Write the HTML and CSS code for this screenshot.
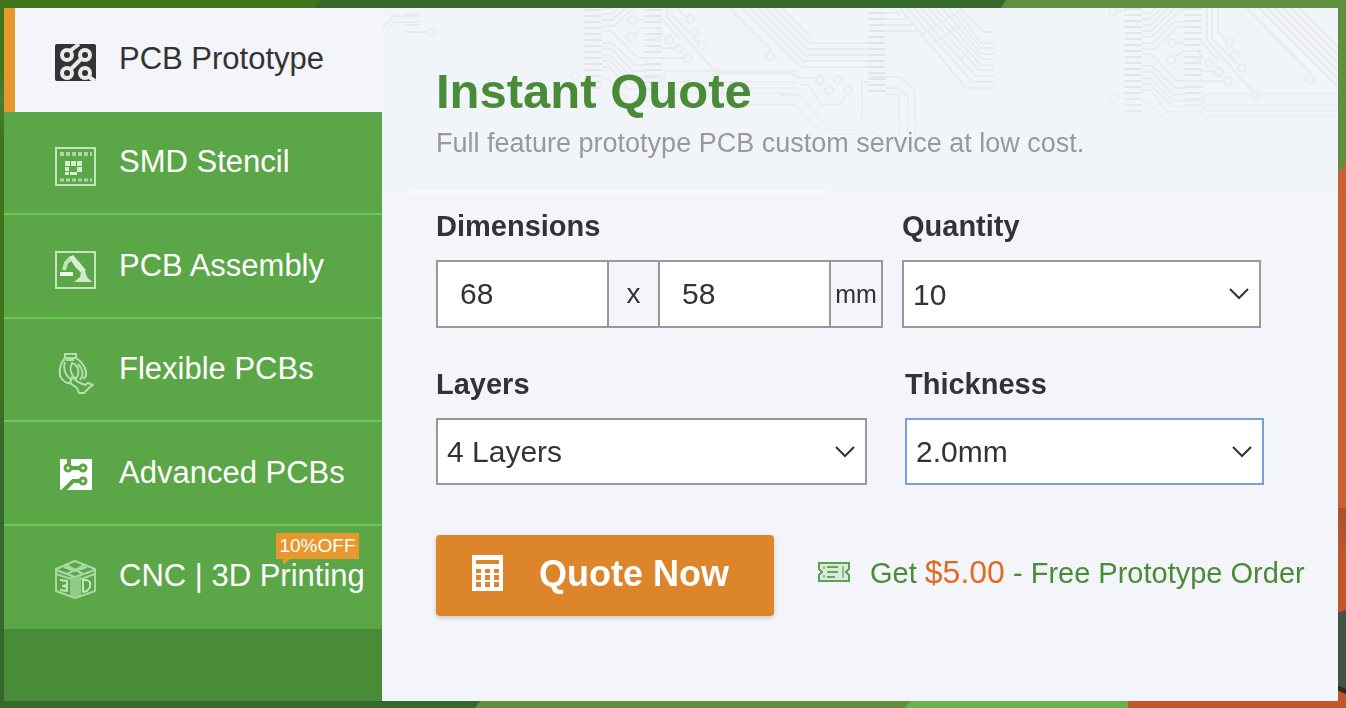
FILE: index.html
```html
<!DOCTYPE html>
<html lang="en">
<head>
<meta charset="utf-8">
<meta name="viewport" content="width=device-width, initial-scale=1">
<title>Instant Quote</title>
<link rel="stylesheet" href="styles.css">
</head>
<body>
<svg class="backdrop" viewBox="0 0 1346 708" preserveAspectRatio="none" aria-hidden="true">
  <defs>
    <linearGradient id="leftFade" x1="0" y1="0" x2="0" y2="1">
      <stop offset="0" stop-color="#3f751c"/><stop offset="0.1" stop-color="#3f751c"/><stop offset="0.14" stop-color="#4a8030"/><stop offset="0.19" stop-color="#3f751c"/><stop offset="0.55" stop-color="#3f751c"/><stop offset="0.62" stop-color="#35682b"/><stop offset="1" stop-color="#35682b"/>
    </linearGradient>
    <linearGradient id="shade" x1="0" y1="0" x2="0" y2="1">
      <stop offset="0" stop-color="#a5522f"/><stop offset="1" stop-color="#c45729"/>
    </linearGradient>
  </defs>
  <rect width="1346" height="708" fill="#35682b"/>
  <rect width="10" height="708" fill="url(#leftFade)"/>
  <path d="M0 0H320L312 12H0Z" fill="#3f751c"/>
  <path d="M1006 0H1346V200H1330V12H998Z" fill="#5f8f3f"/>
  <path d="M1346 163L1334 178V708H1346Z" fill="#cb6032"/>
  <path d="M1334 508H1346V560H1334Z" fill="url(#shade)"/>
  <path d="M1334 560H1346V708H1334Z" fill="#c45729"/>
  <path d="M1334 614L1346 610V694L1334 688Z" fill="#435344"/>
  <path d="M1334 684L1346 689V694L1334 689Z" fill="#2a2c23"/>
  <path d="M482 698H920V708H475Z" fill="#5f8f3f"/>
  <path d="M912 698H1127L1129 708H905Z" fill="#62b54f"/>
  <path d="M1127 698H1346V708H1129Z" fill="#c45729"/>
</svg>

<main class="panel">
  <nav class="side" aria-label="Services">
    <ul class="menu">
      <li class="item item--active"><a class="link" href="#pcb" aria-current="page">
        <svg class="icon" viewBox="0 0 41 41" aria-hidden="true">
          <rect y="2" width="41" height="37" rx="2" fill="#333"/>
          <g fill="none" stroke="#e9ebef" stroke-width="4">
            <circle cx="12" cy="13" r="5"/><circle cx="30" cy="13" r="5"/><circle cx="12" cy="31" r="5"/><circle cx="30" cy="31" r="5"/>
            <path d="M15 9L24 2M16 27L26 17M34 35L40 39"/>
          </g>
        </svg>
        <span>PCB Prototype</span></a></li>
      <li class="item"><a class="link" href="#stencil">
        <svg class="icon" viewBox="0 0 41 41" aria-hidden="true">
          <rect x="1" y="2" width="39" height="37" fill="none" stroke="#c3e6c0" stroke-width="2"/>
          <g fill="none" stroke="#a9d8a4">
            <path d="M5 8H37" stroke-dasharray="4 2" stroke-width="4"/><path d="M5 34H37" stroke-dasharray="4 2" stroke-width="3"/>
          </g>
          <g fill="#d6efd4">
            <path d="M10 15H15V20H10ZM16 15H21V20H16ZM22 15H27V20H22ZM10 21H14V25H10ZM22 21H27V26H22ZM10 26H14V29H10ZM15 26H22V29H15Z"/>
          </g>
        </svg>
        <span>SMD Stencil</span></a></li>
      <li class="item"><a class="link" href="#assembly">
        <svg class="icon" viewBox="0 0 41 41" aria-hidden="true">
          <rect x="1" y="3" width="39" height="36" fill="none" stroke="#c3e6c0" stroke-width="2"/>
          <path d="M9 21L11 14L16 9L27 22" fill="none" stroke="#c0e4bd" stroke-width="4" stroke-linejoin="round"/>
          <path d="M14 8L18 6L31 21L27 24L21 19Z" fill="#d6efd4"/>
          <path d="M5 23H18V27H5Z" fill="#eaf8e8"/>
          <path d="M26 22H30L32 28L37 33H19L25 28Z" fill="#cdebca"/>
        </svg>
        <span>PCB Assembly</span></a></li>
      <li class="item"><a class="link" href="#flex">
        <svg class="icon" viewBox="0 0 41 41" aria-hidden="true">
          <g fill="none" stroke="#b5deb1" stroke-width="2" stroke-linejoin="round">
            <path d="M10 1H21V5H10ZM10 5C5 11 4 17 5 23C8 29 13 31 17 30"/>
            <path d="M21 5C28 9 32 17 31 23L28 26M10 9C8 14 9 22 17 27M11 7H19"/>
            <path d="M17 10C14 16 16 22 21 26C25 20 24 12 17 10ZM23 11C28 16 29 22 25 27"/>
            <path d="M17 24L23 29L30 32L33 30L38 32L35 34L29 40H24L22 35L15 30Z"/>
          </g>
        </svg>
        <span>Flexible PCBs</span></a></li>
      <li class="item"><a class="link" href="#advanced">
        <svg class="icon" viewBox="0 0 41 41" aria-hidden="true">
          <path d="M5 3H37V34H5Z" fill="#fff"/>
          <g fill="none" stroke="#5ba647" stroke-width="3">
            <circle cx="13" cy="12" r="3"/><circle cx="28" cy="12" r="3"/><circle cx="28" cy="25" r="3"/>
            <path d="M14 9V2M16 12H25" stroke-width="4"/><path d="M25 25H18L7 36" stroke-width="4"/>
          </g>
        </svg>
        <span>Advanced PCBs</span></a></li>
      <li class="item"><a class="link" href="#cnc">
        <svg class="icon" viewBox="0 0 41 41" aria-hidden="true">
          <path d="M15 16L20 18L26 16V35L20 38L15 35Z" fill="#8fcb87"/>
          <g fill="none" stroke="#a9d8a4" stroke-width="2" stroke-linejoin="round">
            <path d="M1 9L20 1L40 9V31L20 38L1 31ZM1 10L20 17L40 10M1 14L16 19M40 14L26 19M9 7L20 11L32 7M11 5L28 14M30 5L12 14"/>
            <path d="M5 20L12 21V25L8 26L12 27V31L5 30M28 20V32L32 31L35 27V22L32 20Z" stroke="#c3e6c0"/>
          </g>
        </svg>
        <span>CNC | 3D Printing</span></a>
        <span class="badge">10%OFF</span></li>
    </ul>
  </nav>

  <section class="quote">
    <svg class="circuit" viewBox="382 8 956 186" preserveAspectRatio="xMinYMin slice" aria-hidden="true">
      <defs>
        <g id="board" fill="none" stroke="#e9ebef" stroke-width="2">
          <path d="M1133 8V112M1193 8V109" stroke="#e4e5e9" stroke-width="17" stroke-dasharray="2 4"/>
          <path d="M1142 13H1150L1168 -5M1142 19H1150L1174 -5M1142 25H1151L1177 0M1142 31H1151L1180 3M1142 37H1152L1180 10H1186M1142 43H1153L1174 22H1186M1142 49H1154L1178 27H1186"/>
          <path d="M1142 54H1151L1178 81H1200M1142 66H1152L1175 88H1186M1142 72H1152L1172 94H1186M1142 78H1150L1172 101H1198L1208 94M1142 84H1150L1172 106H1198L1206 99M1142 90H1150L1168 112H1200L1208 105"/>
          <path d="M1208 94H1338M1206 105H1338M1206 111H1338M1142 101H1147L1168 123H1202L1210 116H1338" stroke="#ecedf2"/>
          <path d="M1207 -5V40L1253 92M1212 -5V38L1238 65M1218 -5V32L1226 40"/>
          <path d="M1175 58L1182 51H1196L1203 57L1196 64H1202M1198 42H1202L1219 61M1200 71H1214M1201 81H1223M1176 43H1184"/>
          <circle cx="1172" cy="43" r="4"/><circle cx="1171" cy="60" r="4"/><circle cx="1230" cy="42" r="4"/><circle cx="1235" cy="55" r="4"/><circle cx="1242" cy="68" r="4"/><circle cx="1209" cy="63" r="4"/><circle cx="1219" cy="72" r="4"/><circle cx="1228" cy="81" r="4"/><circle cx="1256" cy="95" r="4"/><circle cx="1115" cy="99" r="4" stroke="#ecedf2"/>
          <path d="M1225 -14L1310 72V76M1237 -14L1338 87M1245 -14L1345 86M1253 -14L1347 80M1261 -14L1348 73M1269 -14L1349 66M1277 -14L1350 59"/>
          <circle cx="1310" cy="79" r="4"/>
        </g>
        <linearGradient id="fade" x1="0" y1="0" x2="0" y2="1"><stop offset="0" stop-color="#fff"/><stop offset="0.4" stop-color="#fff"/><stop offset="0.8" stop-color="#444"/></linearGradient>
        <mask id="fadeMask" maskUnits="userSpaceOnUse" x="382" y="8" width="956" height="186"><rect x="382" y="8" width="956" height="186" fill="url(#fade)"/></mask>
      </defs>
      <rect x="382" y="8" width="956" height="183" fill="#f1f5f9"/>
      <g mask="url(#fadeMask)">
        <use href="#board"/>
        <use href="#board" x="-540" y="-23"/>
        <g fill="none" stroke="#e9ebef" stroke-width="2">
          <path d="M382 28L394 16H420M388 30L394 22H420M405 14H420M405 25H420M405 32H428"/><circle cx="432" cy="32" r="4"/>
          <path d="M808 43H885M808 49H885M806 55H885M804 61H885M802 67H885M715 73H790L800 78H816M800 85H808L822 105H838L846 96M780 95H800L828 130H860M740 105H795L820 131"/>
          <circle cx="820" cy="80" r="4"/><circle cx="838" cy="80" r="4"/><circle cx="829" cy="90" r="4"/><circle cx="848" cy="90" r="4"/>
          <path d="M877 12V96" stroke="#e2e5e8" stroke-width="17" stroke-dasharray="2 4"/>
          <path d="M868 77H900L915 91V162M868 82H862V120L882 140V162M886 88H898L908 96V162M886 94H899V162"/>
          <path d="M886 13H900M886 19H906M886 25H912M886 31H918"/>
          <path d="M900 8L966 88H994M907 8L972 82H994M914 8L976 76H994M921 8L979 70H994M928 8L981 65H994M935 8L981 59H994M942 8L981 54H994M949 8L981 48H994M955 8L981 43H994M960 8L983 32H994M920 35L965 8M930 45L960 25M960 60L972 48"/>
          <path d="M1119 11H1126"/><circle cx="1113" cy="11" r="4"/>
          <path d="M1225 128H1338M1200 136H1250M1240 146H1338" stroke-dasharray="4 3"/>
        </g>
      </g>
      <rect x="409" y="190" width="418" height="4" rx="2" fill="#f9fafa"/>
    </svg>

    <form class="form" action="#" method="get">
      <h1 class="title">Instant Quote</h1>
      <p class="lead">Full feature prototype PCB custom service at low cost.</p>

      <div class="row row--size">
        <div class="field">
          <label class="label" for="width">Dimensions</label>
          <div class="dims">
            <input class="dims-input" id="width" name="width" type="text" value="68">
            <span class="dims-by">x</span>
            <input class="dims-input" name="height" type="text" value="58" aria-label="Height">
            <span class="dims-unit">mm</span>
          </div>
        </div>
        <div class="field">
          <label class="label" for="qty">Quantity</label>
          <div class="pick">
            <select class="select" id="qty" name="qty"><option>5</option><option selected>10</option><option>20</option></select>
            <svg class="chevron" viewBox="0 0 20 12" aria-hidden="true"><path d="M1 1L10 10L19 1"/></svg>
          </div>
        </div>
      </div>

      <div class="row row--stack">
        <div class="field">
          <label class="label" for="layers">Layers</label>
          <div class="pick">
            <select class="select" id="layers" name="layers"><option>2 Layers</option><option selected>4 Layers</option></select>
            <svg class="chevron" viewBox="0 0 20 12" aria-hidden="true"><path d="M1 1L10 10L19 1"/></svg>
          </div>
        </div>
        <div class="field">
          <label class="label" for="thickness">Thickness</label>
          <div class="pick">
            <select class="select select--current" id="thickness" name="thickness"><option>1.6mm</option><option selected>2.0mm</option></select>
            <svg class="chevron" viewBox="0 0 20 12" aria-hidden="true"><path d="M1 1L10 10L19 1"/></svg>
          </div>
        </div>
      </div>

      <div class="actions">
        <button class="submit" type="submit">
          <svg class="calc" viewBox="0 0 31 36" aria-hidden="true">
            <path d="M0 0H31V36H0Z" fill="#fff"/>
            <path d="M4 5H27V9H4ZM4 14H9V18H4ZM13 14H18V18H13ZM22 14H27V18H22ZM4 20H9V25H4ZM13 20H18V25H13ZM22 20H27V25H22ZM4 27H9V32H4ZM13 27H18V32H13ZM22 27H27V32H22Z" fill="#dd852b"/>
          </svg>
          <span>Quote Now</span>
        </button>
        <a class="promo" href="#offer">
          <svg class="ticket" viewBox="0 0 32 22" aria-hidden="true">
            <path d="M1 1H31V7L28 10L31 13V19H1V13L4 10L1 7Z" fill="#dbead9" stroke="#5c9f56" stroke-width="2"/>
            <path d="M9 5H20M9 10H20M9 15H17" fill="none" stroke="#62a55c" stroke-width="2"/>
            <path d="M6 4V7M6 13V16M25 4V16" fill="none" stroke="#8fbf8b" stroke-width="2"/>
          </svg>
          <span>Get <span class="price">$5.00</span> - Free Prototype Order</span>
        </a>
      </div>
    </form>
  </section>
</main>
</body>
</html>
```

FILE: styles.css
```css
*,
*::before,
*::after {
  box-sizing: border-box;
}

body {
  margin: 0;
  font-family: "Liberation Sans", Arial, sans-serif;
  color: #333;
  background: #35682b;
}

.backdrop {
  position: fixed;
  inset: 0;
  z-index: -1;
  width: 100%;
  height: 100%;
}

.panel {
  display: flex;
  min-height: calc(100vh - 15px);
  margin: 8px 8px 7px 4px;
  background: #f3f5fa;
}

.side {
  flex: none;
  width: 378px;
  background: #498b37;
}

.menu {
  display: flex;
  flex-direction: column;
  min-height: 621px;
  margin: 0;
  padding: 0;
  list-style: none;
}

.item {
  position: relative;
  display: flex;
  flex: 1;
  background: #5ba647;
  border-bottom: 2px solid #69cb55;
}

.item:last-child {
  border-bottom-color: #5ba647;
}

.item--active {
  background: #f3f5fa;
  border-bottom-color: #f3f5fa;
  box-shadow: inset 11px 0 #e7992e;
}

.item--active::after {
  content: "";
  position: absolute;
  left: 0;
  bottom: -2px;
  width: 11px;
  height: 2px;
  background: #e7992e;
}

.link {
  display: flex;
  flex: 1;
  align-items: center;
  gap: 23px;
  padding-left: 51px;
  font-size: 31px;
  line-height: 36px;
  color: #fff;
  text-decoration: none;
  white-space: nowrap;
}

.item--active .link {
  color: #333;
}

.icon {
  flex: none;
  width: 41px;
  height: 41px;
  margin-top: 8px;
}

.badge {
  position: absolute;
  top: 7px;
  left: 272px;
  width: 83px;
  font-size: 19px;
  line-height: 26px;
  text-align: center;
  color: #fff;
  background: #e7992e;
}

.badge::after {
  content: "";
  position: absolute;
  top: 100%;
  left: 7px;
  border-style: solid;
  border-width: 6px 7px 0 0;
  border-color: #e7992e transparent transparent;
}

.quote {
  position: relative;
  flex: 1;
  min-width: 0;
}

.circuit {
  position: absolute;
  top: 0;
  left: 0;
  width: 100%;
  height: 186px;
}

.form {
  position: relative;
  padding: 55px 24px 24px 54px;
}

.title {
  margin: 0;
  font-size: 49px;
  line-height: 56px;
  color: #498b37;
}

.lead {
  margin: 8px 0 51px;
  font-size: 27px;
  line-height: 32px;
  color: #999;
}

.row {
  display: grid;
  margin-bottom: 40px;
}

.row--size {
  grid-template-columns: minmax(0, 447px) minmax(0, 359px);
  column-gap: 19px;
}

.row--stack {
  grid-template-columns: minmax(0, 431px) minmax(0, 359px);
  column-gap: 38px;
}

.label {
  display: block;
  margin-bottom: 18px;
  font-size: 29px;
  line-height: 32px;
  font-weight: bold;
}

.dims {
  display: flex;
  height: 68px;
  border: 2px solid #999;
}

.dims-input {
  flex: 1;
  min-width: 0;
  padding: 0 22px;
  font: inherit;
  font-size: 30px;
  color: #333;
  background: #fff;
  border: 0;
  border-radius: 0;
}

.dims-by,
.dims-unit {
  display: flex;
  flex: none;
  align-items: center;
  justify-content: center;
  border-left: 2px solid #999;
}

.dims-by {
  width: 53px;
  font-size: 28px;
  border-right: 2px solid #999;
}

.dims-unit {
  width: 52px;
  font-size: 25px;
}

.pick {
  position: relative;
}

.select {
  display: block;
  width: 100%;
  height: 68px;
  padding: 0 48px 0 9px;
  font: inherit;
  font-size: 30px;
  color: #333;
  background: #fff;
  border: 2px solid #999;
  border-radius: 0;
  appearance: none;
}

.row--stack .select {
  height: 67px;
}

.select--current {
  border-color: #7a9fe0;
}

.chevron {
  position: absolute;
  top: 28px;
  right: 12px;
  width: 20px;
  height: 12px;
  fill: none;
  stroke: #333;
  stroke-width: 2;
  pointer-events: none;
}

.actions {
  display: flex;
  align-items: center;
  gap: 44px;
  margin-top: 50px;
}

.submit {
  display: flex;
  flex: none;
  align-items: center;
  gap: 36px;
  width: 338px;
  height: 81px;
  padding: 0 36px 3px;
  font: inherit;
  font-size: 36px;
  font-weight: bold;
  color: #fff;
  background: #dd852b;
  border: 0;
  border-radius: 4px;
  box-shadow: 0 2px 5px rgba(0, 0, 0, 0.18);
  cursor: pointer;
}

.calc {
  flex: none;
  width: 31px;
  height: 36px;
  margin-bottom: 2px;
}

.promo {
  display: flex;
  align-items: center;
  gap: 20px;
  padding-bottom: 6px;
  font-size: 29px;
  line-height: 36px;
  color: #498b37;
  text-decoration: none;
  white-space: nowrap;
}

.ticket {
  flex: none;
  width: 32px;
  height: 22px;
}

.price {
  font-size: 32px;
  color: #e56a21;
}
```
